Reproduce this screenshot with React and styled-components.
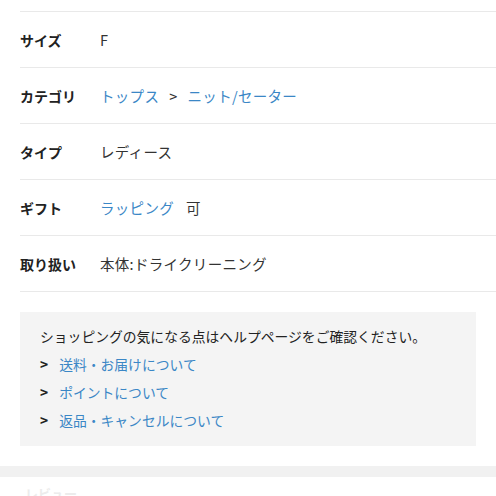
import styled, { createGlobalStyle } from 'styled-components';

// ── Global ─────────────────────────────────────────────────
const GlobalStyle = createGlobalStyle`
  body {
    margin: 0;
    background: #fff;
    font-family: "Noto Sans CJK JP", "Noto Sans", sans-serif;
    color: #222;
  }
`;

// ── Styled Components ──────────────────────────────────────
const Page = styled.div`
  width: 496px;
  height: 496px;
  overflow: hidden;
`;

const Specs = styled.dl`
  margin: 11px 0 0 20px;
  padding: 0;
  border-top: 1px solid #e9e9e9;
`;

const Row = styled.div`
  display: flex;
  align-items: center;
  height: 55px;
  border-bottom: 1px solid #e9e9e9;
`;

const Label = styled.dt`
  width: 80px;
  font-size: 14px;
  font-weight: 700;
  color: #222;
`;

const Value = styled.dd`
  margin: 0;
  font-size: 14.5px;
  letter-spacing: 0.3px;
  color: #333;
`;

const A = styled.a`
  color: #3b87c6;
  text-decoration: none;
`;

const Sep = styled.span`
  margin: 0 10px;
  color: #333;
`;

const Suffix = styled.span`
  margin-left: 12px;
`;

const HelpBox = styled.div`
  margin: 20px 20px 0;
  padding: 13px 20px 12px;
  background: #f4f4f4;
  font-size: 13.8px;
`;

const HelpLead = styled.p`
  margin: 0 0 3px;
  line-height: 22px;
  color: #222;
`;

const HelpList = styled.ul`
  list-style: none;
  margin: 0;
  padding: 0;
`;

const HelpItem = styled.li`
  display: flex;
  gap: 11px;
  line-height: 28px;

  &::before {
    content: '>';
    color: #222;
    font-weight: 700;
  }
`;

const Band = styled.div`
  height: 11px;
  margin-top: 20px;
  background: #f1f1f1;
`;

const Next = styled.div`
  padding: 8px 25px 0;
  font-size: 13px;
  line-height: 18px;
  font-weight: 700;
  color: #ececec;
`;

// ── Data ───────────────────────────────────────────────────
const helpLinks = ['送料・お届けについて', 'ポイントについて', '返品・キャンセルについて'];

// ── Component ──────────────────────────────────────────────
export default function App() {
  return (
    <Page>
      <GlobalStyle />
      <Specs>
        <Row>
          <Label>サイズ</Label>
          <Value>F</Value>
        </Row>
        <Row>
          <Label>カテゴリ</Label>
          <Value>
            <A href="#">トップス</A>
            <Sep>&gt;</Sep>
            <A href="#">ニット/セーター</A>
          </Value>
        </Row>
        <Row>
          <Label>タイプ</Label>
          <Value>レディース</Value>
        </Row>
        <Row>
          <Label>ギフト</Label>
          <Value>
            <A href="#">ラッピング</A>
            <Suffix>可</Suffix>
          </Value>
        </Row>
        <Row>
          <Label>取り扱い</Label>
          <Value>本体:ドライクリーニング</Value>
        </Row>
      </Specs>

      <HelpBox>
        <HelpLead>ショッピングの気になる点はヘルプページをご確認ください。</HelpLead>
        <HelpList>
          {helpLinks.map((t) => (
            <HelpItem key={t}>
              <A href="#">{t}</A>
            </HelpItem>
          ))}
        </HelpList>
      </HelpBox>

      <Band />
      <Next>レビュー</Next>
    </Page>
  );
}
